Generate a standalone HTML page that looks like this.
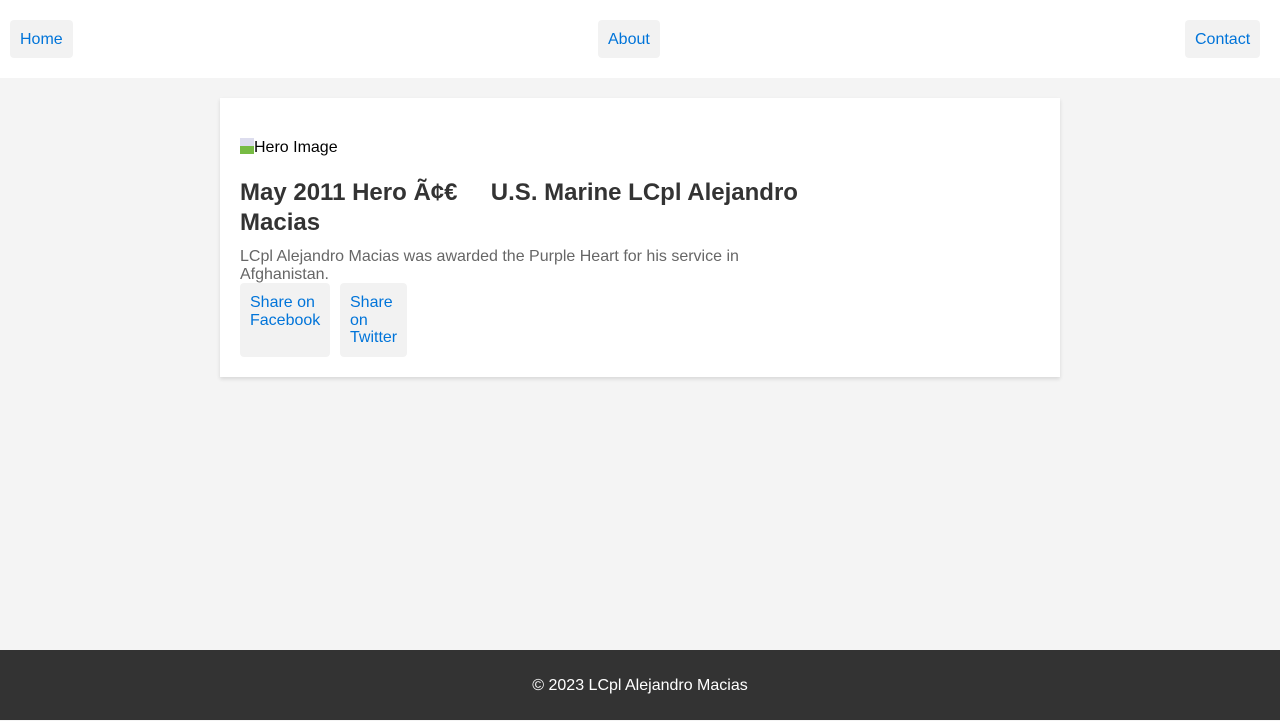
<!DOCTYPE html>
<html><head><meta charset="utf-8"><style>
*{box-sizing:border-box}
body{margin:0;background:#f4f4f4;font-family:"Liberation Sans",Arial,sans-serif;width:1280px;height:720px;position:relative;overflow:hidden}
nav{background:#fff;height:78px;position:relative}
nav a{position:absolute;top:20px;height:38px;line-height:40px;padding:0 10px;background:#f2f2f2;border-radius:4px;color:#0074d9;text-decoration:none;font-size:16px}
.card{position:absolute;left:220px;top:98px;width:840px;height:279px;background:#fff;box-shadow:0 2px 4px rgba(0,0,0,.12);padding:20px}
.img{position:absolute;left:20px;top:40px;font-size:16px;color:#000;line-height:20px}
.img i{display:inline-block;width:14px;height:16px;vertical-align:-2px;background:linear-gradient(#dde 50%,#7b4 50%)}
h2{position:absolute;left:20px;top:80px;width:565px;margin:0;font-size:24px;line-height:30px;color:#333}
p{position:absolute;left:20px;top:150px;width:560px;margin:0;font-size:16px;line-height:18px;color:#666}
.b{position:absolute;top:185px;background:#f2f2f2;border-radius:4px;color:#0074d9;font-size:16px;line-height:17.5px;padding:11px 10px 0;height:74px}
footer{position:absolute;left:0;bottom:0;width:1280px;height:70px;background:#333;color:#fff;text-align:center;line-height:71px;font-size:16px}
</style></head><body>
<nav><a style="left:10px">Home</a><a style="left:598px">About</a><a style="left:1185px">Contact</a></nav>
<div class="card">
<div class="img"><i></i>Hero Image</div>
<h2>May 2011 Hero Ã¢€&nbsp;&nbsp;&nbsp;&nbsp; U.S. Marine LCpl Alejandro Macias</h2>
<p>LCpl Alejandro Macias was awarded the Purple Heart for his service in Afghanistan.</p>
<div class="b" style="left:20px;width:90px">Share on Facebook</div>
<div class="b" style="left:120px;width:67px">Share on Twitter</div>
</div>
<footer>© 2023 LCpl Alejandro Macias</footer>
</body></html>
